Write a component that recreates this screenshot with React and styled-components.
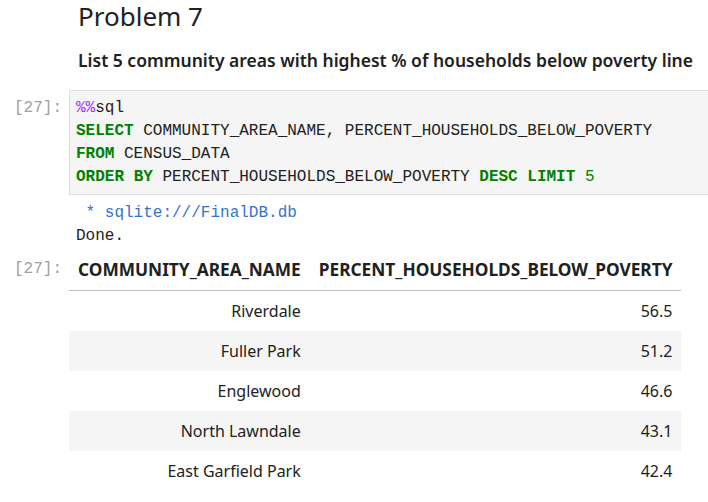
import React from 'react'
import styled, { createGlobalStyle } from 'styled-components'

const GlobalStyle = createGlobalStyle`
  html, body {
    margin: 0;
    padding: 0;
    background: #fff;
    overflow: hidden;
  }
  body {
    font-family: "Noto Sans", "Open Sans", sans-serif;
    color: #212121;
  }
`

const rows = [
  { name: 'Riverdale', pct: '56.5' },
  { name: 'Fuller Park', pct: '51.2' },
  { name: 'Englewood', pct: '46.6' },
  { name: 'North Lawndale', pct: '43.1' },
  { name: 'East Garfield Park', pct: '42.4' },
]

const Notebook = styled.div`
  width: 708px;
  height: 502px;
  display: flex;
  flex-direction: column;
`

const Cell = styled.div`
  display: flex;
  align-items: flex-start;
  margin-top: ${p => p.$gap || 0}px;
`

const Prompt = styled.div`
  width: 62px;
  flex: none;
  padding-right: 7px;
  text-align: right;
  font-family: "Liberation Mono", "DejaVu Sans Mono", monospace;
  font-size: 16px;
  line-height: 23px;
  color: #a0a0a0;
  padding-top: ${p => p.$top || 0}px;
`

const Markdown = styled.div`
  flex: 1;
  padding: 0 9px;
`

const Title = styled.h1`
  margin: 0;
  font-size: 26px;
  font-weight: 400;
  line-height: 33px;
  color: #212121;
`

const Lead = styled.p`
  margin: 15px 0 0;
  font-size: 17.5px;
  font-weight: 600;
  line-height: 24px;
  color: #212121;
  white-space: nowrap;
`

const CodeBox = styled.pre`
  flex: 1;
  margin: 0 -2px 0 0;
  padding: 6px 6px 5px;
  background: #f5f5f5;
  border: 1px solid #e0e0e0;
  font-family: "Liberation Mono", "DejaVu Sans Mono", monospace;
  font-size: 16px;
  line-height: 23px;
  color: #212121;
`

const Magic = styled.span`
  color: #aa22ff;
`

const Kw = styled.span`
  color: #008000;
  font-weight: 700;
`

const Num = styled.span`
  color: #008000;
`

const Stream = styled.pre`
  margin: 0;
  padding: 7px 7px 0;
  font-family: "Liberation Mono", "DejaVu Sans Mono", monospace;
  font-size: 16px;
  line-height: 23px;
  color: #212121;
`

const Link = styled.span`
  color: #3474c9;
`

const Table = styled.table`
  border-collapse: collapse;
  font-size: 16px;
  color: #212121;
`

const Th = styled.th`
  height: 42px;
  padding: 0 9px;
  text-align: right;
  font-size: 17.3px;
  font-weight: 700;
  border-bottom: 1px solid #bdbdbd;
  vertical-align: middle;
`

const Tr = styled.tr`
  background: ${p => (p.$odd ? '#f5f5f5' : '#fff')};
`

const Td = styled.td`
  height: 40px;
  padding: 0 9px;
  text-align: right;
  vertical-align: middle;
`

export default function App() {
  return (
    <Notebook>
      <GlobalStyle />
      <Cell>
        <Prompt />
        <Markdown>
          <Title>Problem 7</Title>
          <Lead>List 5 community areas with highest % of households below poverty line</Lead>
        </Markdown>
      </Cell>
      <Cell $gap={18}>
        <Prompt $top={7}>[27]:</Prompt>
        <CodeBox>
          <Magic>%%</Magic>sql{'\n'}
          <Kw>SELECT</Kw> COMMUNITY_AREA_NAME, PERCENT_HOUSEHOLDS_BELOW_POVERTY{'\n'}
          <Kw>FROM</Kw> CENSUS_DATA{'\n'}
          <Kw>ORDER</Kw> <Kw>BY</Kw> PERCENT_HOUSEHOLDS_BELOW_POVERTY <Kw>DESC</Kw> <Kw>LIMIT</Kw> <Num>5</Num>
        </CodeBox>
      </Cell>
      <Cell>
        <Prompt />
        <Stream>
          <Link> * sqlite:///FinalDB.db</Link>{'\n'}Done.
        </Stream>
      </Cell>
      <Cell>
        <Prompt $top={10}>[27]:</Prompt>
        <Table>
          <thead>
            <tr>
              <Th>COMMUNITY_AREA_NAME</Th>
              <Th>PERCENT_HOUSEHOLDS_BELOW_POVERTY</Th>
            </tr>
          </thead>
          <tbody>
            {rows.map((r, i) => (
              <Tr key={r.name} $odd={i % 2 === 1}>
                <Td>{r.name}</Td>
                <Td>{r.pct}</Td>
              </Tr>
            ))}
          </tbody>
        </Table>
      </Cell>
    </Notebook>
  )
}
